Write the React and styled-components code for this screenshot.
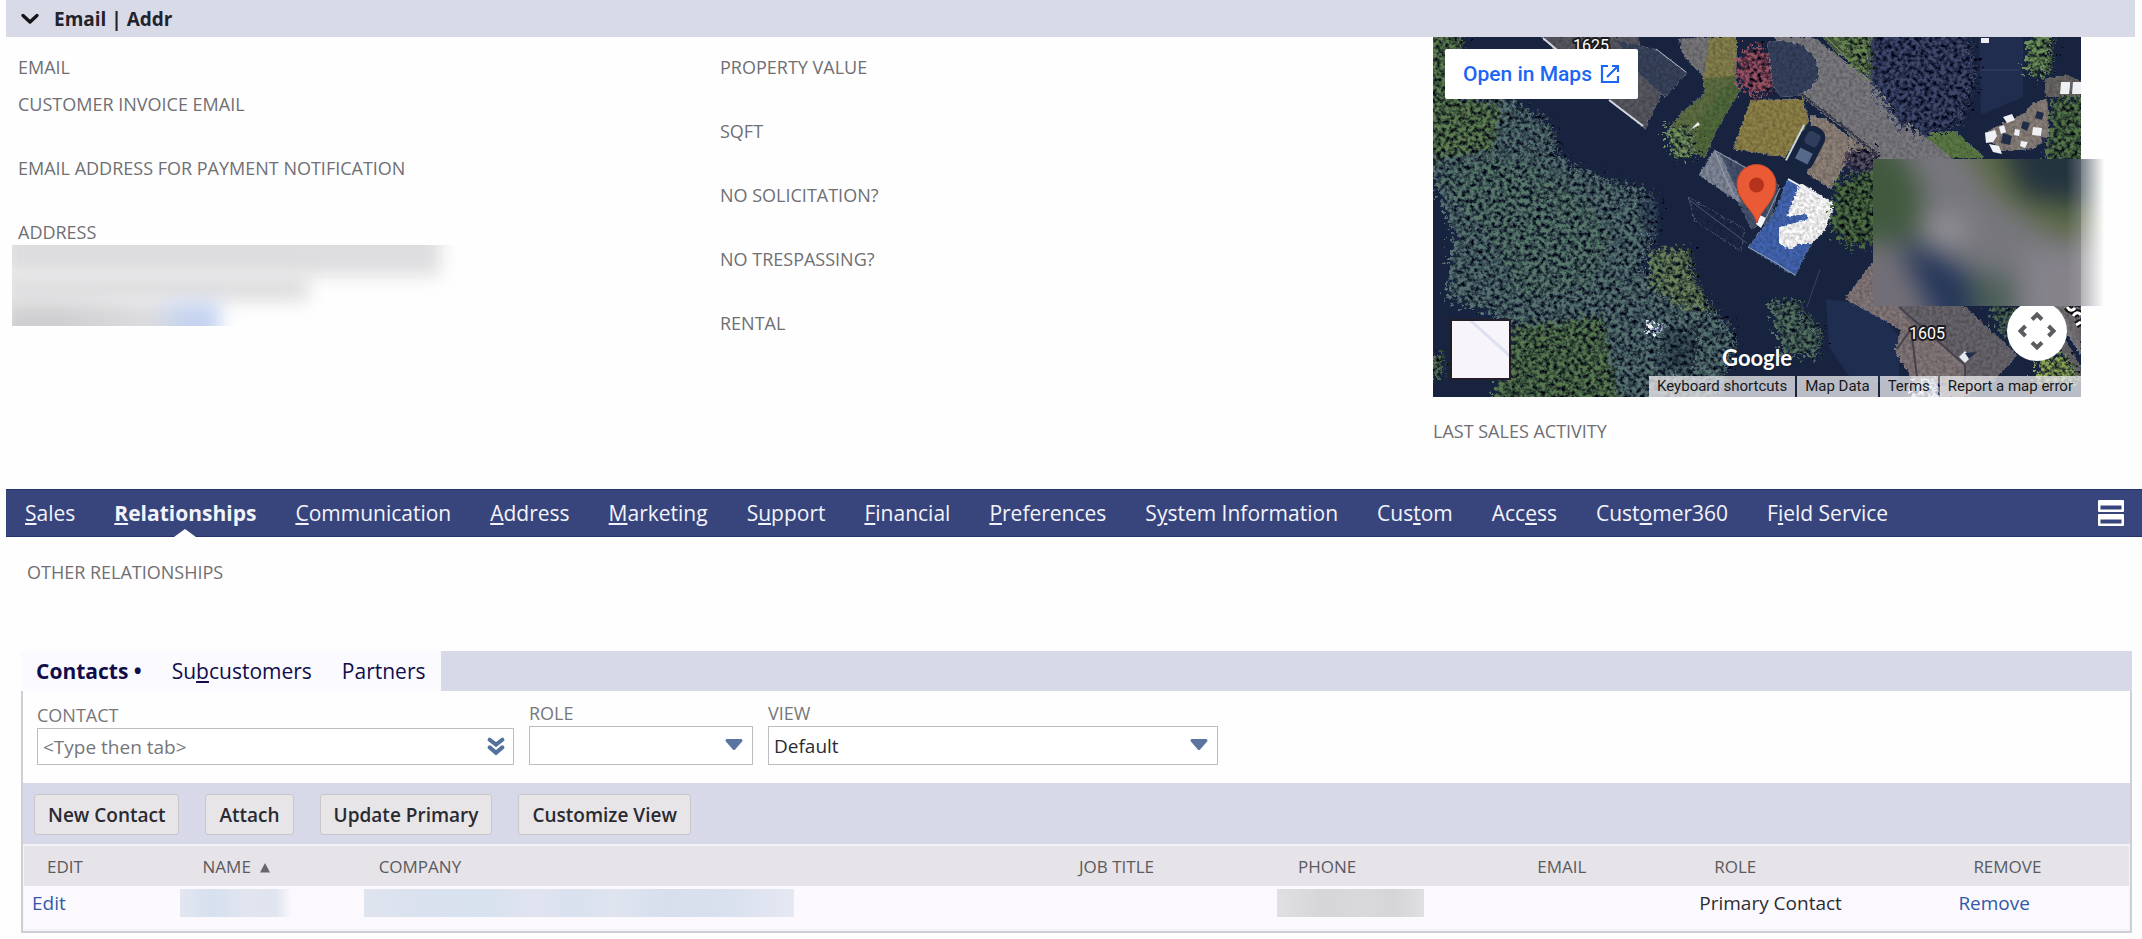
import React from 'react';
import styled, { createGlobalStyle, css } from 'styled-components';

const GlobalStyle = createGlobalStyle`
  *,
  *::before,
  *::after {
    box-sizing: border-box;
  }

  body {
    margin: 0;
    background-color: #fefefe;
    color: #2b2b33;
    font-family: 'Open Sans', 'Noto Sans', sans-serif;
    font-size: 19px;
  }

  button,
  input,
  select {
    font-family: inherit;
  }
`;

const Page = styled.main`
  padding-left: 6px;
`;

const SectionHeader = styled.h2`
  display: flex;
  align-items: center;
  margin: 0 7px 0 0;
  background-color: #d9dae7;
`;

const SectionToggle = styled.button`
  display: flex;
  align-items: center;
  gap: 14px;
  height: 37px;
  padding: 0 14px;
  border: none;
  background: none;
  color: #23232b;
  font-size: 19px;
  font-weight: 700;
  cursor: pointer;
`;

const SectionBody = styled.section`
  display: grid;
  grid-template-columns: 702fr 713fr 709fr;
  min-height: 452px;
  padding-left: 12px;
`;

const FieldColumn = styled.div`
  display: flex;
  flex-direction: column;
  padding-top: 17px;
`;

const Field = styled.div`
  min-height: ${({ $compact }) => ($compact ? '37px' : '64px')};
`;

const FieldLabel = styled.div`
  color: #6f6f74;
  font-size: 18px;
  line-height: 26px;
  text-transform: uppercase;
`;

const RedactedBlock = styled.div`
  display: flex;
  flex-direction: column;
  width: 450px;
  height: 81px;
  margin-left: -6px;
  overflow: hidden;
`;

const RedactedLine = styled.span`
  flex: none;
  display: block;
  width: ${({ width }) => width};
  height: 26px;
  margin-left: -10px;
  background: ${({ $tone }) => $tone || '#dddcde'};
  filter: blur(9px);

  &:first-child {
    height: 50px;
    margin-top: -20px;
  }

  &:last-child {
    height: 60px;
  }
`;

const MapColumn = styled.div`
  display: flex;
  flex-direction: column;
  gap: 21px;
`;

const MapFrame = styled.div`
  position: relative;
  width: 100%;
  max-width: 648px;
  height: 360px;
  background-color: #16243f;
`;

const Satellite = styled.svg`
  display: block;
  width: 100%;
  height: 100%;
`;

const OpenInMaps = styled.a`
  position: absolute;
  top: 12px;
  left: 12px;
  display: flex;
  align-items: center;
  gap: 8px;
  height: 50px;
  padding: 0 18px;
  border-radius: 2px;
  background-color: #fff;
  color: #1b66f5;
  font-family: Roboto, sans-serif;
  font-size: 21px;
  font-weight: 500;
  text-decoration: none;
`;

const MapTypeButton = styled.button`
  position: absolute;
  left: 17px;
  bottom: 17px;
  width: 61px;
  height: 61px;
  padding: 0;
  border: 2px solid #241c26;
  background: linear-gradient(
    42deg,
    #f8f5fa 66%,
    #dfe1ee 67%,
    #dfe1ee 70%,
    #f8f5fa 71%
  );
`;

const CameraButton = styled.button`
  position: absolute;
  right: 14px;
  bottom: 36px;
  width: 60px;
  height: 60px;
  padding: 0;
  border: none;
  border-radius: 50%;
  background-color: #fff;
`;

const GoogleMark = styled.span`
  position: absolute;
  left: 50%;
  bottom: 24px;
  transform: translateX(-50%);
  color: #fff;
  font-family: Lato, sans-serif;
  font-size: 22px;
  font-weight: 700;
  line-height: 30px;
  text-shadow: 0 0 2px rgba(0, 0, 0, 0.5);
`;

const MapFooter = styled.div`
  position: absolute;
  right: 0;
  bottom: 0;
  display: flex;
  gap: 2px;
`;

const mapFooterItem = css`
  height: 21px;
  padding: 0 8px;
  border: none;
  background-color: rgba(238, 238, 240, 0.76);
  color: #17171a;
  font-family: Roboto, sans-serif;
  font-size: 15px;
  line-height: 21px;
  text-decoration: none;
`;

const MapFooterButton = styled.button`
  ${mapFooterItem}
`;

const MapFooterLink = styled.a`
  ${mapFooterItem}
`;

const MapRedaction = styled.svg`
  position: absolute;
  top: 122px;
  left: 440px;
  width: 236px;
  height: 147px;
`;

const NavBar = styled.nav`
  display: flex;
  align-items: center;
  justify-content: space-between;
  height: 48px;
  padding: 0 18px 0 19px;
  border: solid #25346f;
  border-width: 1px 0;
  background-color: #38457d;
`;

const NavList = styled.ul`
  display: flex;
  gap: 39px;
  margin: 0;
  padding: 0;
  list-style: none;
`;

const NavLink = styled.a`
  position: relative;
  display: block;
  padding-top: 1px;
  color: #f3f4fa;
  font-size: 21px;
  font-weight: ${({ $active }) => ($active ? 700 : 400)};
  line-height: 45px;
  text-decoration: none;

  ${({ $active }) =>
    $active &&
    css`
      &::after {
        content: '';
        position: absolute;
        bottom: -1px;
        left: 50%;
        margin-left: -11px;
        border: solid transparent;
        border-width: 0 11px 8px;
        border-bottom-color: #fefefe;
      }
    `}
`;

const IconButton = styled.button`
  display: flex;
  padding: 0;
  border: none;
  background: none;
  cursor: pointer;
`;

const SubHeading = styled.div`
  padding: 22px 21px 66px;
`;

const TabBar = styled.div`
  display: flex;
  margin: 0 10px 0 15px;
  background-color: #d7d9e8;
`;

const TabList = styled.div`
  display: flex;
  gap: 30px;
  padding: 0 16px 0 15px;
  background-color: #fbfaff;
`;

const Tab = styled.button`
  height: 40px;
  padding: 0;
  border: none;
  background: none;
  color: #100d4a;
  font-size: 21px;
  font-weight: ${({ $active }) => ($active ? 700 : 400)};
  cursor: pointer;
`;

const Panel = styled.section`
  margin: 0 10px 0 15px;
  border: 2px solid #cfced6;
  border-top: none;
  background-color: #fefefe;
`;

const Filters = styled.form`
  display: flex;
  align-items: flex-end;
  gap: 15px;
  padding: 9px 14px 18px;
`;

const FilterGroup = styled.div`
  flex: 0 1 ${({ width }) => width};
  display: flex;
  flex-direction: column;
`;

const FilterLabel = styled.label`
  color: #77777c;
  font-size: 18px;
  line-height: 26px;
  text-transform: uppercase;
`;

const Control = styled.div`
  position: relative;
  display: flex;

  svg {
    position: absolute;
    top: ${({ $search }) => ($search ? '9px' : '12px')};
    right: 9px;
    pointer-events: none;
  }
`;

const controlBox = css`
  width: 100%;
  padding: 0 5px;
  border: 1px solid #bdbcc3;
  border-radius: 0;
  background-color: #fff;
  color: #2b2b33;
  font-size: 19px;
`;

const TextInput = styled.input`
  ${controlBox}
  height: 37px;

  &::placeholder {
    color: #76767b;
    opacity: 1;
  }
`;

const Select = styled.select`
  ${controlBox}
  height: 39px;
  appearance: none;
`;

const Toolbar = styled.div`
  display: flex;
  gap: 26px;
  padding: 11px 11px 9px;
  background-color: #d7d9e8;
`;

const ToolbarButton = styled.button`
  height: 41px;
  padding: 0 13px;
  border: 1px solid #c9c6cb;
  border-radius: 3px;
  background-color: #e7e5e8;
  color: #2a2a30;
  font-size: 19px;
  font-weight: 600;
  cursor: pointer;
`;

const ContactsTable = styled.table`
  width: 100%;
  border-collapse: collapse;
  border: solid #f4f3f8;
  border-width: 2px 1px;
  table-layout: fixed;
`;

const HeadCell = styled.th`
  width: ${({ width }) => width};
  height: 41px;
  padding: 0 0 0 23px;
  background-color: #e6e4e8;
  color: #5a5a5f;
  font-size: 17px;
  font-weight: 400;
  text-align: left;
  text-transform: uppercase;

  svg {
    margin-left: 9px;
  }
`;

const Cell = styled.td`
  height: 44px;
  padding: 0 0 10px ${({ $inset }) => $inset || '8px'};
  border-bottom: 1px solid #eceaf0;
  background-color: #fbf9fd;
  font-size: 19px;
`;

const CellLink = styled.a`
  color: #3358a8;
  text-decoration: none;
`;

const RedactedValue = styled.span`
  display: block;
  width: ${({ width }) => width};
  height: 28px;
  background: ${({ $fill }) => $fill};
`;

const COLUMN_UNITS = 2105;
const share = (units) => `${(units / COLUMN_UNITS) * 100}%`;

const leftFields = [
  { label: 'Email', compact: true },
  { label: 'Customer Invoice Email' },
  { label: 'Email Address for Payment Notification' },
];

const middleFields = [
  'Property Value',
  'SQFT',
  'No Solicitation?',
  'No Trespassing?',
  'Rental',
];

// `key` is the index of the underlined access-key letter
const navItems = [
  { text: 'Sales', key: 0 },
  { text: 'Relationships', key: 0, active: true },
  { text: 'Communication', key: 0 },
  { text: 'Address', key: 0 },
  { text: 'Marketing', key: 0 },
  { text: 'Support', key: 1 },
  { text: 'Financial', key: 0 },
  { text: 'Preferences', key: 0 },
  { text: 'System Information', key: 1 },
  { text: 'Custom', key: 3 },
  { text: 'Access', key: 3 },
  { text: 'Customer360', key: 4 },
  { text: 'Field Service', key: 1 },
];

const columns = [
  { text: 'Edit', units: 156 },
  { text: 'Name', units: 176, sorted: true },
  { text: 'Company', units: 700 },
  { text: 'Job Title', units: 219 },
  { text: 'Phone', units: 239 },
  { text: 'Email', units: 177 },
  { text: 'Role', units: 259 },
  { text: 'Remove', units: 179 },
];

const AccessKeyText = ({ text, index }) => (
  <>
    {text.slice(0, index)}
    <u>{text[index]}</u>
    {text.slice(index + 1)}
  </>
);

const ChevronIcon = () => (
  <svg width="20" height="12" viewBox="0 0 20 12" aria-hidden="true">
    <path
      d="M3 2.5 L10 9 L17 2.5"
      fill="none"
      stroke="#15151a"
      strokeWidth="3.4"
      strokeLinecap="round"
      strokeLinejoin="round"
    />
  </svg>
);

const ExternalIcon = () => (
  <svg width="20" height="20" viewBox="0 0 20 20" aria-hidden="true">
    <path
      d="M8 2 H2 V18 H18 V12 M12 2 H18 V8 M18 2 L7 13"
      fill="none"
      stroke="#1b66f5"
      strokeWidth="2.2"
    />
  </svg>
);

const LayoutIcon = () => (
  <svg width="26" height="26" viewBox="0 0 26 26" aria-hidden="true">
    <path
      fill="#fff"
      fillRule="evenodd"
      d="M1 0h24a1 1 0 0 1 1 1v10a1 1 0 0 1-1 1H1a1 1 0 0 1-1-1V1a1 1 0 0 1 1-1z M2.500 5.500v4h21v-4z M1 14h24a1 1 0 0 1 1 1v10a1 1 0 0 1-1 1H1a1 1 0 0 1-1-1V15a1 1 0 0 1 1-1z M2.500 19.500v4h21v-4z"
    />
  </svg>
);

const DoubleChevronIcon = () => (
  <svg
    width="18"
    height="19"
    viewBox="0 0 20 20"
    fill="none"
    stroke="#54709c"
    strokeWidth="4.500"
    strokeLinecap="round"
    aria-hidden="true"
  >
    <path d="M3 2.500 L10 8 L17 2.500 M3 11 L10 17 L17 11" />
  </svg>
);

const ArrowIcon = () => (
  <svg width="20" height="14" viewBox="0 0 20 14" aria-hidden="true">
    <path
      d="M3 2.500 H17 L10 10.500 Z"
      fill="#5b75a0"
      stroke="#5b75a0"
      strokeWidth="3"
      strokeLinejoin="round"
    />
  </svg>
);

const SortIcon = () => (
  <svg width="10" height="10" viewBox="0 0 10 10" aria-hidden="true">
    <path d="M5 0 L10 9.500 H0 Z" fill="#66666b" />
  </svg>
);

const CameraIcon = () => (
  <svg
    width="60"
    height="60"
    viewBox="0 0 60 60"
    fill="none"
    stroke="#5c5c60"
    strokeWidth="4"
    aria-hidden="true"
  >
    <path d="M25 18.500 L30 13.500 L35 18.500 M25 41.500 L30 46.500 L35 41.500 M18.500 25 L13.500 30 L18.500 35 M41.500 25 L46.500 30 L41.500 35" />
  </svg>
);

const SatelliteImage = () => (
  <Satellite
    viewBox="0 0 648 360"
    preserveAspectRatio="xMidYMid slice"
    role="img"
    aria-label="Satellite map"
  >
    <defs>
      <filter
        id="foliage"
        x="-5%"
        y="-5%"
        width="110%"
        height="110%"
        colorInterpolationFilters="sRGB"
      >
        <feTurbulence
          type="fractalNoise"
          baseFrequency="0.24"
          numOctaves="3"
          seed="7"
          result="noise"
        />
        <feDisplacementMap
          in="SourceGraphic"
          in2="noise"
          scale="30"
          xChannelSelector="R"
          yChannelSelector="G"
          result="ragged"
        />
        <feColorMatrix
          in="noise"
          type="matrix"
          values="2.4 0 0 0 -0.55  2.4 0 0 0 -0.52  2 0 0 0 -0.24  0 0 0 0 1"
          result="speckle"
        />
        <feBlend in="speckle" in2="ragged" mode="multiply" result="mixed" />
        <feComposite in="mixed" in2="ragged" operator="in" />
      </filter>
      <filter
        id="grain"
        x="0"
        y="0"
        width="100%"
        height="100%"
        colorInterpolationFilters="sRGB"
      >
        <feTurbulence
          type="fractalNoise"
          baseFrequency="0.3"
          numOctaves="3"
          seed="3"
          result="noise"
        />
        <feDisplacementMap
          in="SourceGraphic"
          in2="noise"
          scale="4"
          xChannelSelector="R"
          yChannelSelector="G"
          result="rough"
        />
        <feColorMatrix
          in="noise"
          type="matrix"
          values="0.5 0 0 0 0.66  0.5 0 0 0 0.66  0.5 0 0 0 0.66  0 0 0 0 1"
          result="speckle"
        />
        <feBlend in="speckle" in2="rough" mode="multiply" result="mixed" />
        <feComposite in="mixed" in2="rough" operator="in" />
      </filter>
    </defs>

    <rect width="648" height="360" fill="#18243f" />
    <path d="M393 262 L440 268 L466 300 V345 H420 L396 310 Z" fill="#1f2e50" />
    <path d="M546 0 H590 V60 L548 78 Z" fill="#202d4e" />

    {/* ground, road and lawns */}
    <g filter="url(#grain)">
      <path
        d="M342 0 H380 L437 43 L488 96 L518 121 L590 200 L648 280 V318 L620 275 L560 225 L470 150 L411 92 L367 58 Z"
        fill="#7b7a80"
      />
      <path d="M367 56 L411 90 L444 117" stroke="#3a3d48" strokeWidth="2" />
      <path d="M245 2 L275 0 L285 30 L275 45 L252 20 Z" fill="#77777a" />
      <path
        d="M277 0 H304 L303 40 L270 44 L272 28 Z"
        fill="#85804c"
      />
      <path
        d="M270 42 L304 38 L303 56 L284 88 L266 118 L252 104 L236 92 L248 76 L272 56 Z"
        fill="#5f6f42"
      />
      <path
        d="M296 45 L308 52 L284 92 L272 120 L262 116 L268 82 Z"
        fill="#516b3b"
      />
      <path d="M318 63 L370 62 L376 84 L352 120 L300 112 Z" fill="#8f8248" />
      <path
        d="M377 78 L393 82 L434 113 L414 124 L398 152 L374 136 L382 108 Z"
        fill="#8f8279"
      />
      <path d="M390 0 H440 V46 L428 32 L400 12 Z" fill="#48613c" />
      <path d="M488 96 L522 94 L552 121 H518 Z" fill="#5c7a45" />
      <path d="M602 272 L612 270 L648 330 V345 Z" fill="#68656c" />
      <path d="M626 270 H648 V310 Z" fill="#756f73" />
      <path d="M612 42 L632 38 L648 44 V60 H612 Z" fill="#6a6666" />
    </g>

    {/* buildings */}
    <g filter="url(#grain)">
      <path d="M108 0 H205 L214 44 L231 52 L212 92 L160 48 L126 16 Z" fill="#585862" />
      <path d="M184 4 L222 12 L254 36 L232 60 L206 36 Z" fill="#38435c" />
      <path d="M281 113 L346 148 L338 184 L318 192 L303 160 L266 138 Z" fill="#45536f" />
      <path d="M281 113 L290 122 L310 168 L292 156 L266 138 Z" fill="#80889a" />
      <path d="M255 160 L312 192 L308 214 L262 184 Z" fill="#1c2849" />
      <path d="M315 210 L340 178 L355 142 L401 168 L381 202 L362 239 Z" fill="#4366b4" />
      <path
        d="M439 226 L471 268 L530 268 L584 318 L560 345 L530 360 H490 L462 313 L468 293 L412 262 Z"
        fill="#837779"
      />
      <path d="M464 266 L530 268 L584 318 L560 345 L534 342 L532 326 L476 283 Z" fill="#69656d" />
    </g>
    <g fill="none">
      <path d="M110 1 L124 13 M176 63 L210 89" stroke="#d7d8df" strokeWidth="2" />
      <path d="M223 12 L253 35" stroke="#b8bcc8" strokeWidth="1" />
      <path d="M282 114 L292 140 L302 160 M281 113 L342 147" stroke="#9aa2b2" strokeWidth="1" />
      <path d="M255 162 L314 206" stroke="#4c5670" strokeWidth="1" />
      <path d="M466 270 L532 328 V348 M478 292 L484 340 M464 312 L478 292" stroke="#45424e" strokeWidth="2" />
      <path d="M548 33 H586 M387 232 L374 270" stroke="#36435f" strokeWidth="1" />
      <path d="M393 0 L440 48 L488 100" stroke="#8f897a" strokeWidth="1" />
    </g>
    <g filter="url(#grain)">
      <path
        d="M368 147 L401 168 L391 193 L378 206 L364 206 L358 212 L346 205 L347 191 L376 183 L374 176 L355 178 Z"
        fill="#fff"
        stroke="#fff"
        strokeWidth="2"
      />
    </g>
    <path d="M355 142 L401 168" stroke="#eef2f8" strokeWidth="2" />
    <path d="M327 178 L333 181 L328 191 L323 187 Z" fill="#f2f5fa" />
    <path
      d="M333 181 L347 151 M315 210 L340 224 L362 238"
      fill="none"
      stroke="#90a2b8"
      strokeWidth="1"
    />
    <path d="M526 320 L532 314 L538 320 L532 326 Z" fill="#e4eaf0" />
    <path d="M532 316 L544 315 L536 322 Z" fill="#222f4b" />

    {/* tree canopy */}
    <g filter="url(#foliage)">
      <path
        d="M-20 50 L74 60 L120 88 L128 122 L166 138 L219 156 L222 200 L208 230 L230 262 L292 280 L306 304 L290 350 L280 380 H56 L84 300 L60 276 L14 262 L22 200 L4 150 Z"
        fill="#57716e"
      />
      <path d="M-20 -20 H36 L28 22 L24 60 L70 68 L60 112 L-20 126 Z" fill="#5f7d4f" />
      <path d="M6 140 L60 120 L112 134 L160 170 L180 200 L160 250 L90 262 L60 200 Z" fill="#59786a" />
      <path d="M80 290 L170 280 L190 380 H56 Z" fill="#58774e" />
      <path d="M216 214 L256 210 L264 246 L284 276 L246 270 L218 250 Z" fill="#6b835a" />
      <path d="M232 88 L262 92 L264 120 L240 120 Z" fill="#78935c" />
      <path d="M336 264 L364 264 L390 294 L386 320 L352 318 Z" fill="#557160" />
      <path d="M402 146 L450 130 V206 L416 210 L398 190 Z" fill="#4f6e42" />
      <path d="M596 -10 H622 L618 40 L594 38 Z" fill="#6f9056" />
      <path d="M620 62 L664 56 V126 H612 Z" fill="#557448" />
      <path d="M608 322 L634 316 L650 346 L602 346 Z" fill="#8fa756" />
      <path d="M556 270 H584 L592 306 L572 300 Z" fill="#4c6654" />
      <path d="M402 -6 H446 L444 44 L420 30 Z" fill="#6b874f" />
      <path d="M-20 318 H12 V340 H-20 Z" fill="#5a7552" />
    </g>
    <g filter="url(#foliage)">
      <path d="M206 160 L226 162 L226 196 L214 200 Z" fill="#3d5162" />
      <path d="M234 286 L268 290 L262 340 L226 330 Z" fill="#3d5358" />
      <ellipse cx="324" cy="34" rx="20" ry="25" fill="#9c5160" />
      <path d="M440 -20 H532 L546 40 L530 84 L492 100 L464 86 L438 46 Z" fill="#3f4868" />
      <ellipse cx="428" cy="122" rx="18" ry="12" fill="#5a5060" />
      <path d="M482 342 H504 L516 380 H476 Z" fill="#fff" />
    </g>
    <g filter="url(#grain)">
      <path
        d="M334 6 L350 3 L370 8 L383 22 L386 38 L378 52 L362 59 L348 60 L340 48 Z"
        fill="#36425f"
      />
    </g>

    {/* parked cars and yard clutter */}
    <g transform="rotate(27 375 111)">
      <rect x="363" y="88" width="24" height="46" rx="11" fill="#17243f" />
      <rect x="368" y="94" width="14" height="14" rx="4" fill="#303d5c" />
      <rect x="368" y="114" width="14" height="12" fill="#56698a" />
      <path d="M361 92 V132" stroke="#c9d3d2" strokeWidth="2" />
    </g>
    <g filter="url(#grain)">
      <path d="M552 96 L574 84 L592 76 L600 66 L614 62 L616 100 L600 112 L566 114 Z" fill="#8a807a" />
    </g>
    <g fill="#eef0f3">
      <path d="M628 45 h9 v4 l-1 8 h-9 z M640 45 h8 v12 h-9 z" />
      <path d="M552 96 l10 -3 2 6 -4 6 -7 1 z M556 107 l10 2 3 8 -9 -2 z M570 80 l9 -3 3 6 -8 3 z M600 90 l9 1 -1 8 -9 -1 z M588 104 l7 1 -3 6 -5 -2 z M566 90 l5 -2 2 7 -5 2 z M582 92 l5 1 -1 6 -5 -1 z M548 1 h8 v5 h-8 z" />
      <path d="M258 92 l7 -7 2 3 z" />
    </g>
    <g filter="url(#foliage)">
      <path d="M212 284 L232 288 L226 300 L214 296 Z" fill="#fff" />
    </g>
    <g fill="#202c48">
      <path d="M570 96 l9 3 -2 9 -9 -2 z M590 84 l7 2 -3 8 -6 -3 z M604 74 l7 2 -2 7 -7 -2 z M608 100 l6 1 -4 7 z" />
    </g>

    {/* house numbers */}
    <g
      fill="#fff"
      stroke="#1b1b1f"
      strokeWidth="4"
      paintOrder="stroke"
      strokeLinejoin="round"
      fontFamily="Roboto, sans-serif"
      fontSize="16"
      textAnchor="middle"
    >
      <text x="158" y="14">1625</text>
      <text x="494" y="302">1605</text>
    </g>
    <path
      d="M634 270 q4 6 8 1 M640 279 q4 -6 8 -1 M643 288 l5 -3"
      fill="none"
      stroke="#111"
      strokeWidth="7"
    />
    <path
      d="M634 270 q4 6 8 1 M640 279 q4 -6 8 -1 M643 288 l5 -3"
      fill="none"
      stroke="#fff"
      strokeWidth="3"
    />

    {/* location marker */}
    <path
      d="M324 186 C321 173 304 164 304 147 A19.500 19.500 0 0 1 343 147 C343 164 327 173 324 186 Z"
      fill="#ea5a34"
      stroke="#c8482a"
      strokeWidth="1"
    />
    <circle cx="323.500" cy="148" r="7.500" fill="#b5321c" />
  </Satellite>
);

const RedactedMapArea = () => (
  <MapRedaction viewBox="0 0 236 147" preserveAspectRatio="none" aria-hidden="true">
    <defs>
      <filter
        id="soften"
        x="-30%"
        y="-30%"
        width="160%"
        height="160%"
        colorInterpolationFilters="sRGB"
      >
        <feGaussianBlur stdDeviation="13" />
      </filter>
      <linearGradient id="fade">
        <stop offset="0.82" stopColor="#fff" />
        <stop offset="0.9" stopColor="#fff" stopOpacity="0.5" />
        <stop offset="0.98" stopColor="#fff" stopOpacity="0" />
      </linearGradient>
      <mask id="fadeRight">
        <rect width="236" height="147" fill="url(#fade)" />
      </mask>
    </defs>
    <rect x="190" width="18" height="147" fill="#a9a8ac" />
    <g mask="url(#fadeRight)">
      <rect width="236" height="147" fill="#77777d" />
      <g filter="url(#soften)">
        <path d="M-40 -20 H20 L50 30 L44 80 L-40 90 Z" fill="#42593f" />
        <path d="M80 -30 H270 V80 L180 76 L120 34 Z" fill="#5a6844" />
        <path d="M124 -30 H270 V54 L150 38 Z" fill="#24343f" />
        <path d="M24 80 L60 92 L110 124 V180 H70 Z" fill="#26375a" />
        <path d="M-40 100 L30 90 L60 180 H-40 Z" fill="#726e77" />
        <path d="M96 110 L140 120 V180 H100 Z" fill="#4b5e57" />
        <path d="M150 90 H270 V180 H150 Z" fill="#85828a" />
        <ellipse cx="74" cy="70" rx="22" ry="16" fill="#929096" />
      </g>
    </g>
  </MapRedaction>
);

const MapCard = () => (
  <MapFrame>
    <SatelliteImage />
    <OpenInMaps href="#map">
      Open in Maps
      <ExternalIcon />
    </OpenInMaps>
    <MapTypeButton type="button" aria-label="Show street map" />
    <CameraButton type="button" aria-label="Map camera controls">
      <CameraIcon />
    </CameraButton>
    <GoogleMark>Google</GoogleMark>
    <MapFooter>
      <MapFooterButton type="button">Keyboard shortcuts</MapFooterButton>
      <MapFooterButton type="button">Map Data</MapFooterButton>
      <MapFooterLink href="#terms">Terms</MapFooterLink>
      <MapFooterLink href="#report">Report a map error</MapFooterLink>
    </MapFooter>
    <RedactedMapArea />
  </MapFrame>
);

const Details = () => (
  <SectionBody>
    <FieldColumn>
      {leftFields.map(({ label, compact }) => (
        <Field key={label} $compact={compact}>
          <FieldLabel>{label}</FieldLabel>
        </Field>
      ))}
      <Field>
        <FieldLabel>Address</FieldLabel>
        <RedactedBlock>
          <RedactedLine width="438px" />
          <RedactedLine width="306px" />
          <RedactedLine
            width="218px"
            $tone="linear-gradient(90deg, #cfced0 60px, #dddcdf 150px, #c6d4f0 180px)"
          />
        </RedactedBlock>
      </Field>
    </FieldColumn>
    <FieldColumn>
      {middleFields.map((label) => (
        <Field key={label}>
          <FieldLabel>{label}</FieldLabel>
        </Field>
      ))}
    </FieldColumn>
    <MapColumn>
      <MapCard />
      <FieldLabel>Last Sales Activity</FieldLabel>
    </MapColumn>
  </SectionBody>
);

const MainNav = () => (
  <NavBar>
    <NavList>
      {navItems.map(({ text, key, active }) => (
        <li key={text}>
          <NavLink href={`#${text.replace(' ', '-')}`} $active={active}>
            <AccessKeyText text={text} index={key} />
          </NavLink>
        </li>
      ))}
    </NavList>
    <IconButton type="button" aria-label="Toggle layout">
      <LayoutIcon />
    </IconButton>
  </NavBar>
);

const ContactFilters = () => (
  <Filters>
    <FilterGroup width="477px">
      <FilterLabel htmlFor="contact">Contact</FilterLabel>
      <Control $search>
        <TextInput id="contact" type="text" placeholder="<Type then tab>" />
        <DoubleChevronIcon />
      </Control>
    </FilterGroup>
    <FilterGroup width="224px">
      <FilterLabel htmlFor="role">Role</FilterLabel>
      <Control>
        <Select id="role" defaultValue="">
          <option value="" aria-label="None" />
        </Select>
        <ArrowIcon />
      </Control>
    </FilterGroup>
    <FilterGroup width="450px">
      <FilterLabel htmlFor="view">View</FilterLabel>
      <Control>
        <Select id="view" defaultValue="default">
          <option value="default">Default</option>
        </Select>
        <ArrowIcon />
      </Control>
    </FilterGroup>
  </Filters>
);

const Contacts = () => (
  <ContactsTable>
    <thead>
      <tr>
        {columns.map(({ text, units, sorted }) => (
          <HeadCell key={text} width={share(units)} scope="col">
            {text}
            {sorted && <SortIcon />}
          </HeadCell>
        ))}
      </tr>
    </thead>
    <tbody>
      <tr>
        <Cell>
          <CellLink href="#edit">Edit</CellLink>
        </Cell>
        <Cell $inset="0">
          <RedactedValue
            width="112px"
            $fill="linear-gradient(90deg, #e3e6f1, #d6e0ee 28%, #e2e5f0 60%, #dfe4ef 85%, #fbf9fd)"
          />
        </Cell>
        <Cell>
          <RedactedValue
            width="430px"
            $fill="linear-gradient(90deg, #dfe4ef, #d9e1ee 15%, #d8e2ee 30%, #e1e4f0 40%, #d9e1ee 48%, #dfe4ef 58%, #d7dfed 70%, #d9e1ee 85%, #e6e8f3)"
          />
        </Cell>
        <Cell />
        <Cell $inset="2px">
          <RedactedValue
            width="147px"
            $fill="linear-gradient(90deg, #e0dfe1, #d6d5d7 30%, #d9d8da 60%, #d5d4d6 80%, #e0dfe1)"
          />
        </Cell>
        <Cell />
        <Cell>Primary Contact</Cell>
        <Cell>
          <CellLink href="#remove">Remove</CellLink>
        </Cell>
      </tr>
    </tbody>
  </ContactsTable>
);

const App = () => {
  const [open, setOpen] = React.useState(true);

  return (
    <>
      <GlobalStyle />
      <Page>
        <SectionHeader>
          <SectionToggle
            type="button"
            aria-expanded={open}
            onClick={() => setOpen((prev) => !prev)}
          >
            <ChevronIcon />
            Email | Addr
          </SectionToggle>
        </SectionHeader>
        {open && <Details />}
        <MainNav />
        <SubHeading>
          <FieldLabel>Other Relationships</FieldLabel>
        </SubHeading>
        <TabBar>
          <TabList role="tablist">
            <Tab type="button" role="tab" aria-selected="true" $active>
              Contacts •
            </Tab>
            <Tab type="button" role="tab" aria-selected="false">
              <AccessKeyText text="Subcustomers" index={2} />
            </Tab>
            <Tab type="button" role="tab" aria-selected="false">
              Partners
            </Tab>
          </TabList>
        </TabBar>
        <Panel>
          <ContactFilters />
          <Toolbar>
            <ToolbarButton type="button">New Contact</ToolbarButton>
            <ToolbarButton type="button">Attach</ToolbarButton>
            <ToolbarButton type="button">Update Primary</ToolbarButton>
            <ToolbarButton type="button">Customize View</ToolbarButton>
          </Toolbar>
          <Contacts />
        </Panel>
      </Page>
    </>
  );
};

export default App;
